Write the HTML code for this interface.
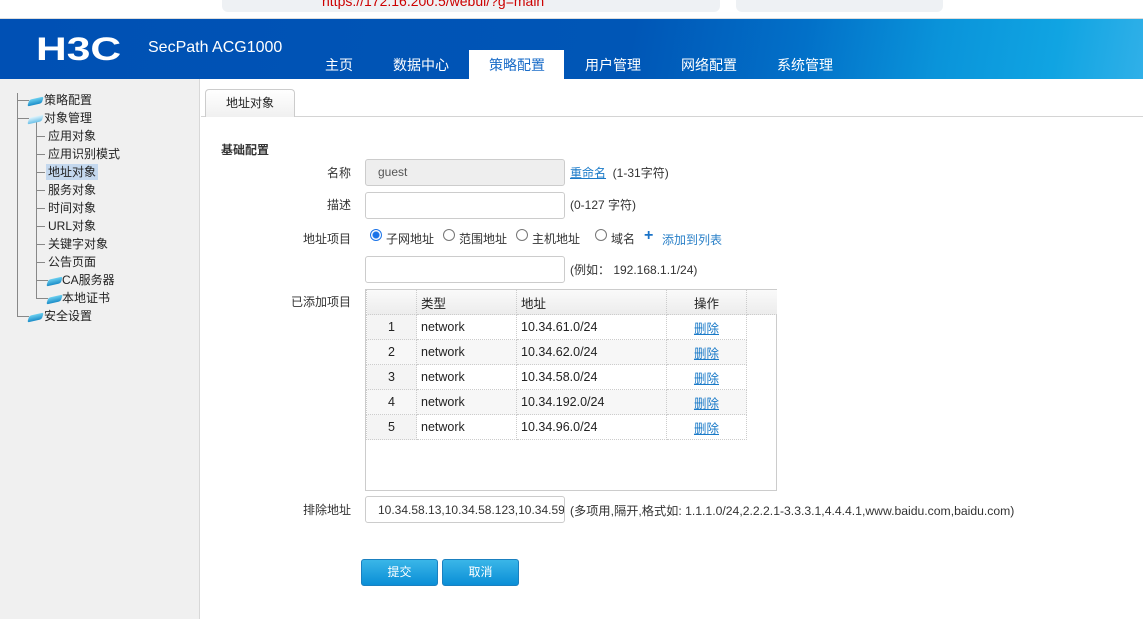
<!DOCTYPE html>
<html><head><meta charset="utf-8"><style>
*{margin:0;padding:0;box-sizing:border-box}
body{width:1143px;height:619px;overflow:hidden;background:#fff;font-family:"Liberation Sans","Noto Sans CJK SC",sans-serif;font-size:12px;color:#333;position:relative}
.a{position:absolute;white-space:nowrap}
.hdr{position:absolute;left:0;top:19px;width:1143px;height:60px;background:linear-gradient(100deg,#0050b4 0%,#0056b6 55%,#0270c8 70%,#0a94da 82%,#10a4e2 92%,#30b0e8 100%)}
.nav{position:absolute;top:54px;color:#fff;font-size:14px;height:22px;line-height:22px}
.side{position:absolute;left:0;top:79px;width:200px;height:540px;background:#f0f0f0;border-right:1px solid #d8d8d8}
.t{position:absolute;font-size:12px;color:#222;line-height:16px}
.ico{position:absolute;width:13px;height:7px;background:linear-gradient(#6cd0f0,#1a8cc8);transform:skewX(-30deg) rotate(-15deg);border-radius:2px}
.lbl{position:absolute;width:120px;text-align:right;left:231px;font-size:12px;color:#333}
.inp{position:absolute;left:365px;width:200px;height:27px;border:1px solid #ccc;border-radius:3px;background:#fff}
table{position:absolute;left:366px;top:289px;border-collapse:collapse;font-size:12.5px}
td{height:25px;border:1px dotted #ccc;padding:0 4px;color:#222}
.lk{color:#1a7ac8;text-decoration:underline}
.btn{position:absolute;top:559px;width:77px;height:27px;border-radius:3px;background:linear-gradient(#3ab6e8,#0a8ed6);border:1px solid #1a80c0;color:#fff;text-align:center;line-height:25px;font-size:12px}
.rad{position:absolute;width:12px;height:12px;border:1px solid #777;border-radius:50%;background:#fff}
</style></head><body>
<div class="a" style="left:222px;top:0;width:498px;height:12px;background:#eef1f4;border-radius:0 0 6px 6px"></div>
<div class="a" style="left:736px;top:0;width:207px;height:12px;background:#eef1f4;border-radius:0 0 6px 6px"></div>
<div class="a" style="left:322px;top:-7px;color:#c00;font-size:14px">https://172.16.200.5/webui/?g=main</div>
<div class="a" style="left:0;top:18px;width:1143px;height:1px;background:#ddd"></div>
<div class="hdr"></div>
<div class="a" style="left:36px;top:32px;color:#fff;font-size:32px;font-weight:bold;line-height:34px;transform:scaleX(1.33);transform-origin:left">H3C</div>
<div class="a" style="left:148px;top:39px;color:#fff;font-size:16px">SecPath ACG1000</div>
<div class="nav" style="left:325px">主页</div>
<div class="nav" style="left:393px">数据中心</div>
<div class="a" style="left:469px;top:50px;width:95px;height:29px;background:#fff"></div>
<div class="nav" style="left:489px;color:#1a6cc8">策略配置</div>
<div class="nav" style="left:585px">用户管理</div>
<div class="nav" style="left:681px">网络配置</div>
<div class="nav" style="left:777px">系统管理</div>
<div class="side">
<div class="a" style="left:17px;top:14px;width:1px;height:224px;background:#888"></div>
<div class="a" style="left:36px;top:43px;width:1px;height:177px;background:#888"></div>
</div>
<div class="a" style="left:17px;top:100px;width:12px;height:1px;background:#888"></div>
<div class="ico" style="left:29px;top:98px"></div><div class="t" style="left:44px;top:92px">策略配置</div>
<div class="a" style="left:17px;top:118px;width:12px;height:1px;background:#888"></div>
<div class="ico" style="left:29px;top:116px;background:linear-gradient(#e0f4fc,#6ac0e8)"></div><div class="t" style="left:44px;top:110px">对象管理</div>
<div class="a" style="left:36px;top:136px;width:9px;height:1px;background:#888"></div><div class="t" style="left:48px;top:128px">应用对象</div>
<div class="a" style="left:36px;top:154px;width:9px;height:1px;background:#888"></div><div class="t" style="left:48px;top:146px">应用识别模式</div>
<div class="a" style="left:36px;top:172px;width:9px;height:1px;background:#888"></div><div class="t" style="left:46px;top:164px;background:#c4d8ee;padding:0 2px">地址对象</div>
<div class="a" style="left:36px;top:190px;width:9px;height:1px;background:#888"></div><div class="t" style="left:48px;top:182px">服务对象</div>
<div class="a" style="left:36px;top:208px;width:9px;height:1px;background:#888"></div><div class="t" style="left:48px;top:200px">时间对象</div>
<div class="a" style="left:36px;top:226px;width:9px;height:1px;background:#888"></div><div class="t" style="left:48px;top:218px">URL对象</div>
<div class="a" style="left:36px;top:244px;width:9px;height:1px;background:#888"></div><div class="t" style="left:48px;top:236px">关键字对象</div>
<div class="a" style="left:36px;top:262px;width:9px;height:1px;background:#888"></div><div class="t" style="left:48px;top:254px">公告页面</div>
<div class="a" style="left:36px;top:280px;width:12px;height:1px;background:#888"></div>
<div class="ico" style="left:48px;top:278px"></div><div class="t" style="left:62px;top:272px">CA服务器</div>
<div class="a" style="left:36px;top:298px;width:12px;height:1px;background:#888"></div>
<div class="ico" style="left:48px;top:296px"></div><div class="t" style="left:62px;top:290px">本地证书</div>
<div class="a" style="left:17px;top:316px;width:12px;height:1px;background:#888"></div>
<div class="ico" style="left:29px;top:314px"></div><div class="t" style="left:44px;top:308px">安全设置</div>

<div class="a" style="left:201px;top:116px;width:942px;height:1px;background:#d4d4d4"></div>
<div class="a" style="left:205px;top:89px;width:90px;height:28px;border:1px solid #ccc;border-bottom:none;border-radius:4px 4px 0 0;background:linear-gradient(#fff,#f0f0f0);text-align:center;line-height:26px;font-size:12px;color:#222">地址对象</div>

<div class="a" style="left:221px;top:141px;font-weight:bold;color:#333">基础配置</div>
<div class="lbl" style="top:164px">名称</div>
<div class="inp" style="top:159px;background:#eee"></div>
<div class="a" style="left:378px;top:165px;color:#555">guest</div>
<div class="a" style="left:570px;top:164px"><span class="lk">重命名</span>&nbsp; (1-31字符)</div>
<div class="lbl" style="top:196px">描述</div>
<div class="inp" style="top:192px"></div>
<div class="a" style="left:570px;top:196px">(0-127 字符)</div>
<div class="lbl" style="top:230px">地址项目</div>
<div class="rad" style="left:370px;top:229px;border-color:#1a73e8;background:radial-gradient(#1a73e8 3px,#fff 4px)"></div>
<div class="a" style="left:386px;top:230px">子网地址</div>
<div class="rad" style="left:443px;top:229px"></div><div class="a" style="left:459px;top:230px">范围地址</div>
<div class="rad" style="left:516px;top:229px"></div><div class="a" style="left:532px;top:230px">主机地址</div>
<div class="rad" style="left:595px;top:229px"></div><div class="a" style="left:611px;top:230px">域名</div>
<div class="a" style="left:644px;top:227px;color:#1a73c8;font-size:16px;font-weight:bold">+</div>
<div class="a" style="left:662px;top:231px;color:#2a80c8">添加到列表</div>
<div class="inp" style="top:256px"></div>
<div class="a" style="left:570px;top:261px">(例如： 192.168.1.1/24)</div>
<div class="lbl" style="top:293px">已添加项目</div>
<div class="a" style="left:365px;top:289px;width:412px;height:202px;border:1px solid #ccc"></div>
<table>
<tr style="background:linear-gradient(#fafafa,#ececec)"><td style="width:50px"></td><td style="width:100px">类型</td><td style="width:150px">地址</td><td style="width:80px;text-align:center">操作</td><td style="width:30px;border-right:none"></td></tr>
<tr><td style="text-align:center;background:#f4f4f4">1</td><td>network</td><td>10.34.61.0/24</td><td style="text-align:center"><span class="lk">删除</span></td></tr>
<tr style="background:#f7f7f7"><td style="text-align:center">2</td><td>network</td><td>10.34.62.0/24</td><td style="text-align:center"><span class="lk">删除</span></td></tr>
<tr><td style="text-align:center;background:#f4f4f4">3</td><td>network</td><td>10.34.58.0/24</td><td style="text-align:center"><span class="lk">删除</span></td></tr>
<tr style="background:#f7f7f7"><td style="text-align:center">4</td><td>network</td><td>10.34.192.0/24</td><td style="text-align:center"><span class="lk">删除</span></td></tr>
<tr><td style="text-align:center;background:#f4f4f4">5</td><td>network</td><td>10.34.96.0/24</td><td style="text-align:center"><span class="lk">删除</span></td></tr>
</table>
<div class="lbl" style="top:501px">排除地址</div>
<div class="inp" style="top:496px;overflow:hidden"><span style="position:absolute;left:12px;top:6px;color:#333">10.34.58.13,10.34.58.123,10.34.59</span></div>
<div class="a" style="left:570px;top:501px;font-size:12.2px">(多项用,隔开,格式如: 1.1.1.0/24,2.2.2.1-3.3.3.1,4.4.4.1,www.baidu.com,baidu.com)</div>
<div class="btn" style="left:361px">提交</div>
<div class="btn" style="left:442px">取消</div>
</body></html>
